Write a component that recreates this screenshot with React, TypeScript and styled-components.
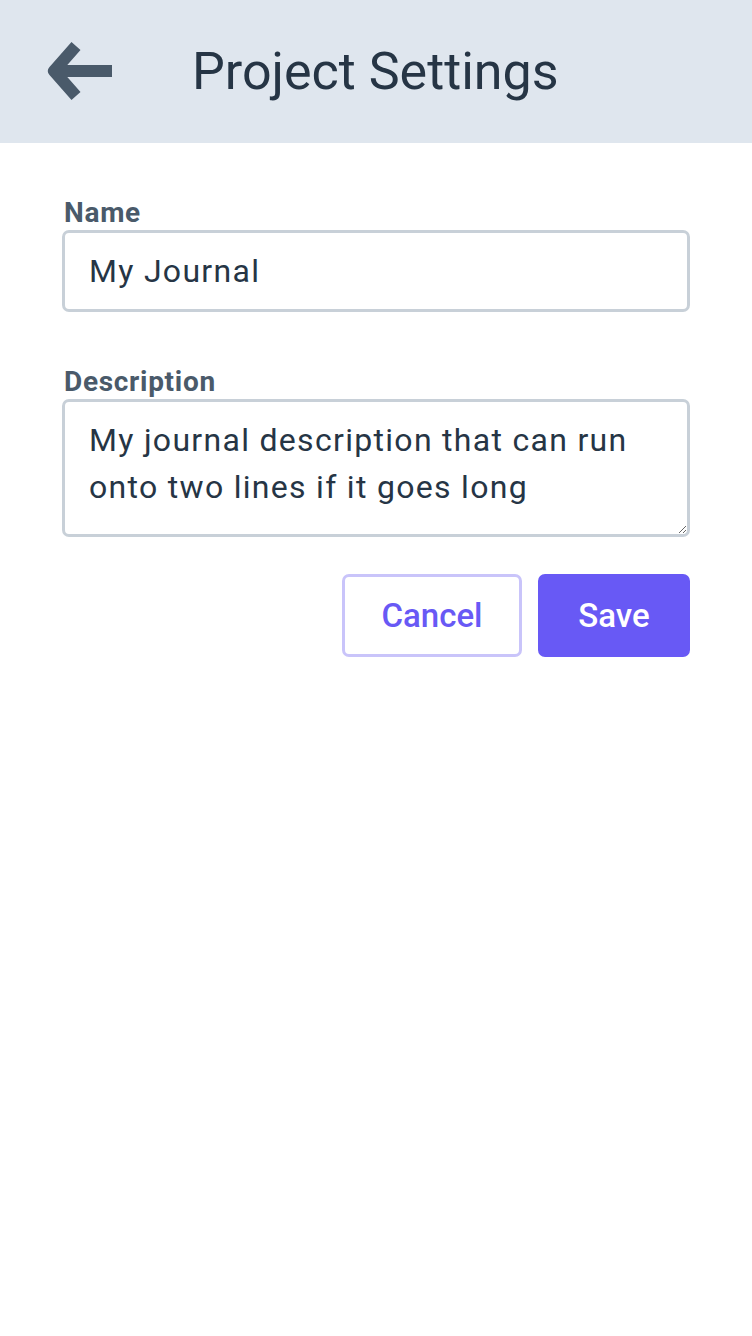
import React from "react";
import styled, { createGlobalStyle } from "styled-components";

const Global = createGlobalStyle`
  html, body { margin: 0; padding: 0; background: #ffffff; }
  body { font-family: Roboto, "Noto Sans", sans-serif; }
  * { box-sizing: border-box; }
`;

const Page = styled.div`
  width: 752px;
  min-height: 1336px;
  background: #ffffff;
`;

const Header = styled.header`
  height: 143px;
  background: #dfe6ee;
  display: flex;
  align-items: center;
  padding-left: 46px;
  gap: 78px;
`;

const BackButton = styled.button`
  border: none;
  background: transparent;
  padding: 0;
  width: 68px;
  height: 60px;
  display: flex;
  align-items: center;
  justify-content: center;
  cursor: pointer;
`;

const Title = styled.h1`
  margin: 0;
  font-family: Roboto, sans-serif;
  font-weight: 400;
  font-size: 52px;
  color: #263545;
`;

const Form = styled.form`
  display: flex;
  flex-direction: column;
  padding: 55px 62px 0 62px;
`;

const Field = styled.div<{ $gap?: number }>`
  display: flex;
  flex-direction: column;
  gap: 2px;
  margin-bottom: ${(p) => p.$gap ?? 0}px;
`;

const Label = styled.label`
  font-family: Roboto, sans-serif;
  font-weight: 700;
  font-size: 28px;
  line-height: 30px;
  color: #4a5a6a;
  padding-left: 2px;
  letter-spacing: 0.7px;
`;

const TextInput = styled.input`
  height: 82px;
  border: 3px solid #c8d0d8;
  border-radius: 7px;
  padding: 0 24px;
  font-family: Roboto, sans-serif;
  font-size: 32px;
  letter-spacing: 1.3px;
  color: #263545;
  outline: none;
  background: #fff;
`;

const TextArea = styled.textarea`
  height: 138px;
  border: 3px solid #c8d0d8;
  border-radius: 7px;
  padding: 15px 24px;
  font-family: Roboto, sans-serif;
  font-size: 32px;
  letter-spacing: 1.3px;
  line-height: 47px;
  color: #263545;
  outline: none;
  resize: vertical;
  background: #fff;
`;

const Actions = styled.div`
  display: flex;
  justify-content: flex-end;
  gap: 16px;
  margin-top: 37px;
`;

const Button = styled.button<{ $primary?: boolean; $width: number }>`
  width: ${(p) => p.$width}px;
  height: 83px;
  border-radius: 7px;
  font-family: Roboto, sans-serif;
  font-size: 33px;
  font-weight: 500;
  cursor: pointer;
  border: 3px solid ${(p) => (p.$primary ? "#6859f5" : "#c9c4fa")};
  background: ${(p) => (p.$primary ? "#6859f5" : "#ffffff")};
  color: ${(p) => (p.$primary ? "#ffffff" : "#6859f5")};
`;

function BackArrow() {
  return (
    <svg width="68" height="60" viewBox="0 0 68 60" aria-hidden="true">
      <path
        d="M66 29 H8 M30 4 L8 29 L30 54"
        fill="none"
        stroke="#4a5a6a"
        strokeWidth="12"
        strokeLinejoin="round"
      />
    </svg>
  );
}

export default function App() {
  return (
    <Page>
      <Global />
      <Header>
        <BackButton aria-label="Back">
          <BackArrow />
        </BackButton>
        <Title>Project Settings</Title>
      </Header>
      <Form onSubmit={(e) => e.preventDefault()}>
        <Field $gap={55}>
          <Label htmlFor="name">Name</Label>
          <TextInput id="name" defaultValue="My Journal" />
        </Field>
        <Field>
          <Label htmlFor="desc">Description</Label>
          <TextArea
            id="desc"
            defaultValue="My journal description that can run onto two lines if it goes long"
          />
        </Field>
        <Actions>
          <Button type="button" $width={180}>Cancel</Button>
          <Button type="submit" $primary $width={152}>Save</Button>
        </Actions>
      </Form>
    </Page>
  );
}
